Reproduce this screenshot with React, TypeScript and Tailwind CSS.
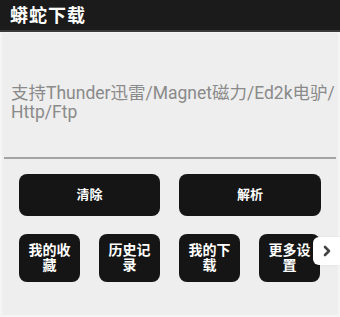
import React from "react";

const font = { fontFamily: 'Roboto, "Noto Sans CJK SC", sans-serif' };

function SmallBtn({ a, b }: { a: string; b: string }) {
  return (
    <div className="w-[61px] h-[48px] rounded-[8px] bg-[#151515] flex flex-col items-center justify-center text-white text-[14px] leading-[15px] font-bold">
      <span>{a}</span>
      <span>{b}</span>
    </div>
  );
}

export default function App() {
  return (
    <div className="w-[340px] h-[317px] bg-[#f5f5f5] overflow-hidden relative" style={font}>
      <div className="h-[32px] bg-[#1b1b1b] border-b-[2px] border-[#3a3a3a] flex items-center pl-[10px]">
        <span className="text-white text-[18px] font-bold tracking-[1px]">蟒蛇下载</span>
      </div>
      <div className="mx-[2px] mt-[1px] h-[282px] bg-[#eeeeee] flex flex-col">
        <div className="mx-[2px] h-[126px] border-b-[2px] border-[#a3a3a3] pt-[51px] pl-[7px] whitespace-nowrap text-[17.5px] leading-[19px] text-[#8a8a8a]">
          支持Thunder迅雷/Magnet磁力/Ed2k电驴/
          <br />
          Http/Ftp
        </div>
        <div className="mt-[15px] flex gap-[19px] pl-[17px]">
          <div className="w-[141px] h-[42px] rounded-[8px] bg-[#151515] flex items-center justify-center text-white text-[13px] font-bold">清除</div>
          <div className="w-[142px] h-[42px] rounded-[8px] bg-[#151515] flex items-center justify-center text-white text-[13px] font-bold">解析</div>
        </div>
        <div className="mt-[18px] flex gap-[19px] pl-[17px]">
          <SmallBtn a="我的收" b="藏" />
          <SmallBtn a="历史记" b="录" />
          <SmallBtn a="我的下" b="载" />
          <SmallBtn a="更多设" b="置" />
        </div>
      </div>
      <div className="absolute left-[313px] top-[237px] w-[27px] h-[28px] bg-white rounded-l-[6px] flex items-center justify-center shadow-[0_0_2px_rgba(0,0,0,0.1)]">
        <svg width="10" height="12" viewBox="0 0 10 12">
          <path d="M3 2 L7 6 L3 10" stroke="#444" strokeWidth="2.6" fill="none" strokeLinecap="round" strokeLinejoin="round" />
        </svg>
      </div>
    </div>
  );
}
